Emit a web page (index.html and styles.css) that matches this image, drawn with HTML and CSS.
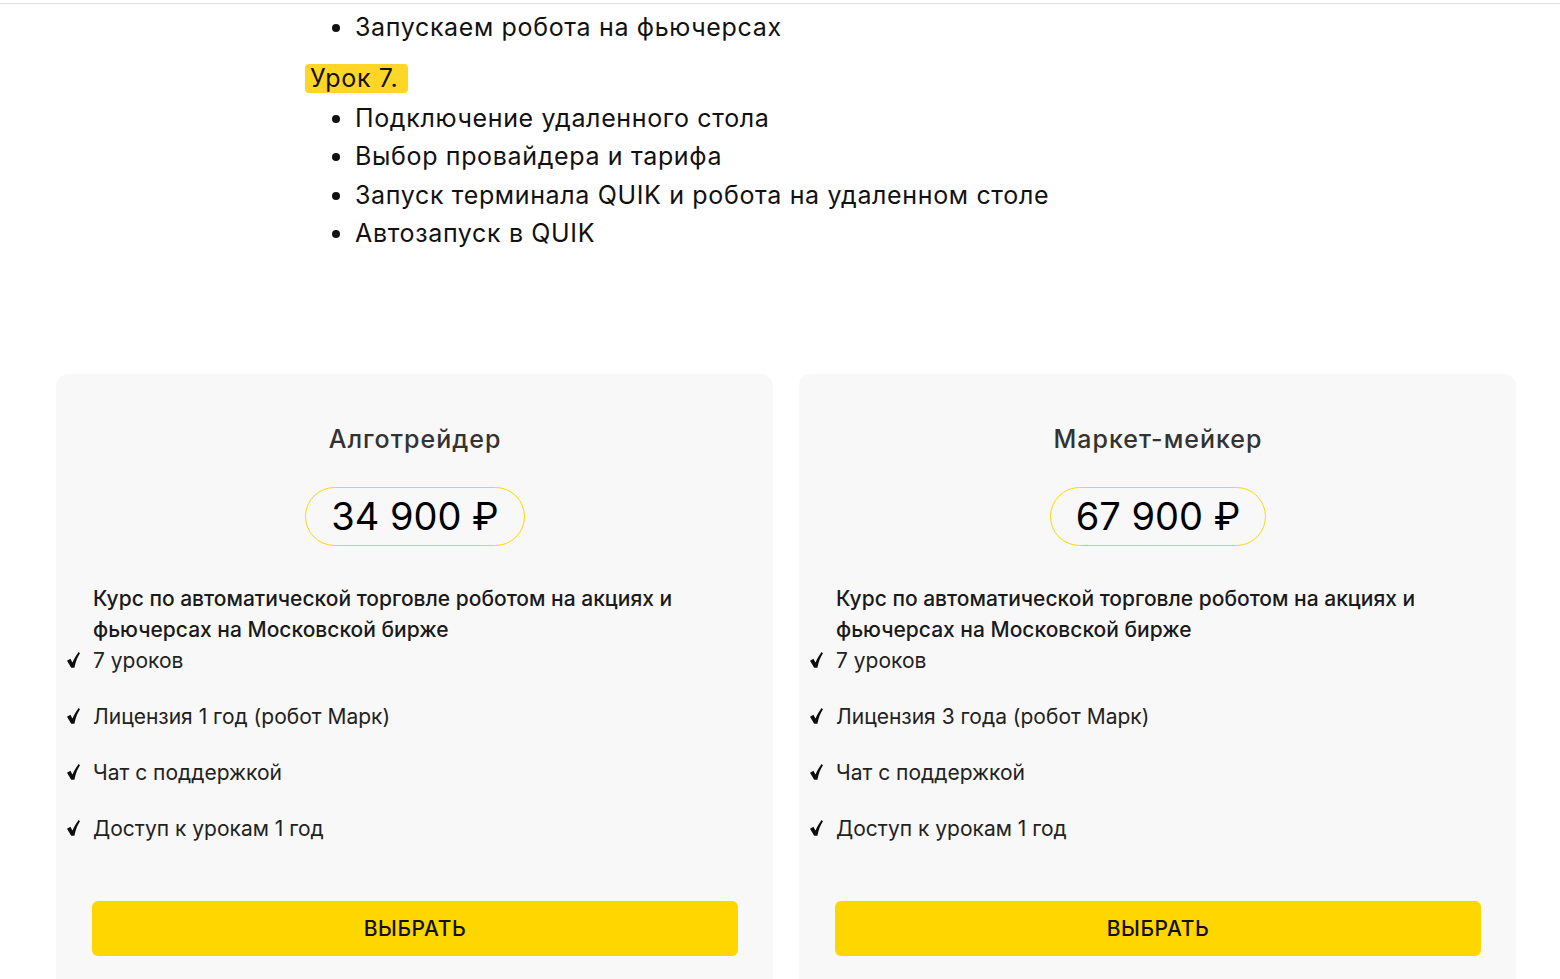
FILE: index.html
```html
<!DOCTYPE html>
<html lang="ru">
<head>
<meta charset="utf-8">
<title>Тарифы</title>
<link rel="stylesheet" href="styles.css">
</head>
<body>
<div class="topbar"></div>
<section class="program">
  <ul class="lesson-list">
    <li>Запускаем робота на фьючерсах</li>
  </ul>
  <p class="lesson-title"><span class="mark">Урок 7.</span></p>
  <ul class="lesson-list">
    <li>Подключение удаленного стола</li>
    <li>Выбор провайдера и тарифа</li>
    <li>Запуск терминала QUIK и робота на удаленном столе</li>
    <li>Автозапуск в QUIK</li>
  </ul>
</section>
<section class="plans">
  <div class="card">
    <h3 class="card-title">Алготрейдер</h3>
    <div class="price">34 900 ₽</div>
    <p class="desc">Курс по автоматической торговле роботом на акциях и фьючерсах на Московской бирже</p>
    <ul class="features">
      <li><svg class="check" viewBox="0 0 13 16"><path d="M0 8.8 L3.4 6.8 L5.4 10.6 C7.2 6.6 9.2 3.2 11.6 0 L13 1.2 C10.6 4.8 8.6 9.6 7.4 15.8 L4.2 15.8 Z"/></svg><span>7 уроков</span></li>
      <li><svg class="check" viewBox="0 0 13 16"><path d="M0 8.8 L3.4 6.8 L5.4 10.6 C7.2 6.6 9.2 3.2 11.6 0 L13 1.2 C10.6 4.8 8.6 9.6 7.4 15.8 L4.2 15.8 Z"/></svg><span>Лицензия 1 год (робот Марк)</span></li>
      <li><svg class="check" viewBox="0 0 13 16"><path d="M0 8.8 L3.4 6.8 L5.4 10.6 C7.2 6.6 9.2 3.2 11.6 0 L13 1.2 C10.6 4.8 8.6 9.6 7.4 15.8 L4.2 15.8 Z"/></svg><span>Чат с поддержкой</span></li>
      <li><svg class="check" viewBox="0 0 13 16"><path d="M0 8.8 L3.4 6.8 L5.4 10.6 C7.2 6.6 9.2 3.2 11.6 0 L13 1.2 C10.6 4.8 8.6 9.6 7.4 15.8 L4.2 15.8 Z"/></svg><span>Доступ к урокам 1 год</span></li>
    </ul>
    <button class="btn">ВЫБРАТЬ</button>
  </div>
  <div class="card">
    <h3 class="card-title">Маркет-мейкер</h3>
    <div class="price">67 900 ₽</div>
    <p class="desc">Курс по автоматической торговле роботом на акциях и фьючерсах на Московской бирже</p>
    <ul class="features">
      <li><svg class="check" viewBox="0 0 13 16"><path d="M0 8.8 L3.4 6.8 L5.4 10.6 C7.2 6.6 9.2 3.2 11.6 0 L13 1.2 C10.6 4.8 8.6 9.6 7.4 15.8 L4.2 15.8 Z"/></svg><span>7 уроков</span></li>
      <li><svg class="check" viewBox="0 0 13 16"><path d="M0 8.8 L3.4 6.8 L5.4 10.6 C7.2 6.6 9.2 3.2 11.6 0 L13 1.2 C10.6 4.8 8.6 9.6 7.4 15.8 L4.2 15.8 Z"/></svg><span>Лицензия 3 года (робот Марк)</span></li>
      <li><svg class="check" viewBox="0 0 13 16"><path d="M0 8.8 L3.4 6.8 L5.4 10.6 C7.2 6.6 9.2 3.2 11.6 0 L13 1.2 C10.6 4.8 8.6 9.6 7.4 15.8 L4.2 15.8 Z"/></svg><span>Чат с поддержкой</span></li>
      <li><svg class="check" viewBox="0 0 13 16"><path d="M0 8.8 L3.4 6.8 L5.4 10.6 C7.2 6.6 9.2 3.2 11.6 0 L13 1.2 C10.6 4.8 8.6 9.6 7.4 15.8 L4.2 15.8 Z"/></svg><span>Доступ к урокам 1 год</span></li>
    </ul>
    <button class="btn">ВЫБРАТЬ</button>
  </div>
</section>
</body>
</html>
```

FILE: styles.css
```css
* { box-sizing: border-box; }
html, body { margin: 0; padding: 0; background: #fff; }
body {
  font-family: Inter, "Open Sans", "Liberation Sans", sans-serif;
  color: #111;
  overflow: hidden;
  height: 979px;
}
.topbar {
  height: 4px;
  border-bottom: 1px solid #e2e2e2;
}
.program {
  padding: 4px 0 0 305px;
}
.lesson-list {
  margin: 0;
  padding: 0 0 0 50px;
  font-size: 25px;
  line-height: 38.5px;
  letter-spacing: 0.65px;
  color: #111;
}
.lesson-title {
  margin: 17px 0 6px;
  font-size: 25px;
  line-height: 29px;
  letter-spacing: 0.65px;
}
.mark {
  display: inline-block;
  background: #ffd626;
  border-radius: 4px;
  padding: 0 10px 0 5px;
}
.plans {
  display: flex;
  gap: 26px;
  margin: 121px 0 0 56px;
}
.card {
  width: 717px;
  height: 640px;
  background: #f8f8f8;
  border-radius: 12px;
  padding: 50px 36px 0 37px;
  display: flex;
  flex-direction: column;
}
.card-title {
  margin: 0;
  text-align: center;
  font-size: 25px;
  line-height: 30px;
  font-weight: 500;
  letter-spacing: 1px;
  color: #333;
}
.price {
  align-self: center;
  margin-top: 33px;
  height: 59px;
  padding: 0 25px;
  border: 1px solid #ffd600;
  border-radius: 30px;
  font-size: 38px;
  line-height: 57px;
  color: #000;
}
.desc {
  margin: 37px 0 0;
  font-size: 21px;
  line-height: 31px;
  font-weight: 500;
  color: #1a1a1a;
}
.features {
  list-style: none;
  margin: 0;
  padding: 0;
  font-size: 21px;
  line-height: 31px;
  color: #222;
}
.features li {
  display: flex;
  align-items: center;
  margin-left: -26px;
  margin-bottom: 25px;
}
.check {
  width: 13px;
  height: 16px;
  margin: 0 13px 0 0;
  fill: #0d0d0d;
  flex: none;
}
.btn {
  margin-top: 32px;
  margin-left: -1px;
  height: 55px;
  width: 646px;
  border: none;
  border-radius: 6px;
  background: #ffd600;
  font-family: inherit;
  font-size: 21px;
  font-weight: 500;
  letter-spacing: 0.6px;
  color: #111;
}
```
